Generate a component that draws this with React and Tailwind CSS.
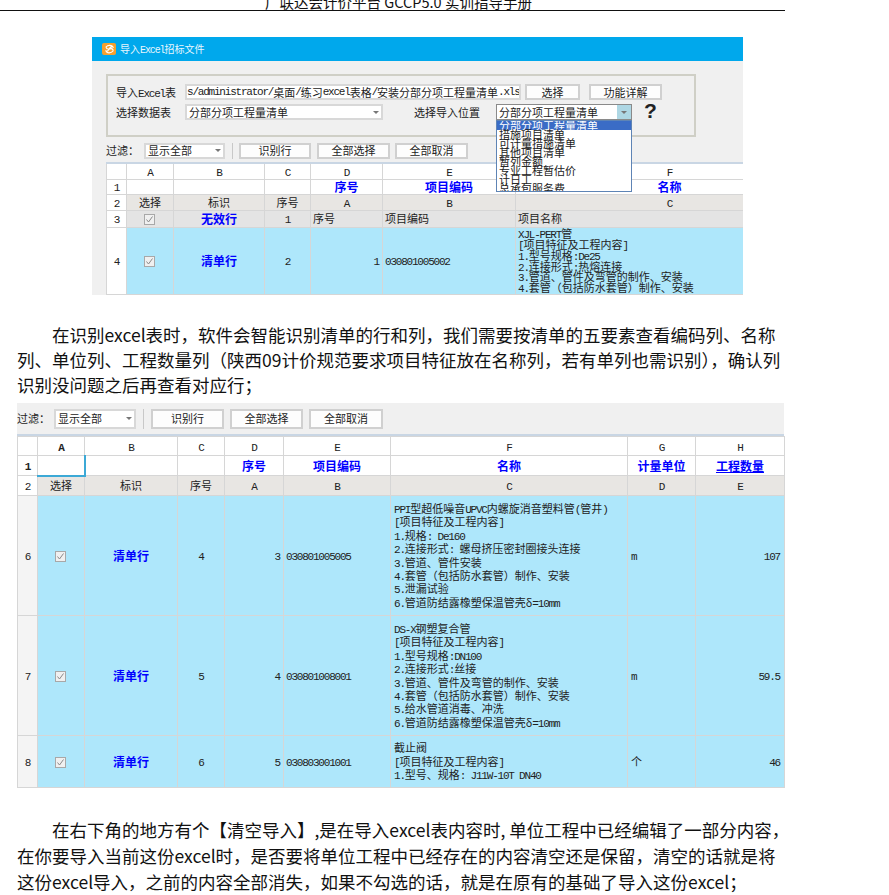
import React from 'react';

const cjk = 'font-["Noto_Sans_CJK_SC",sans-serif]';

// half-width latin next to CJK, like the bitmap font in the grid
const T = ({ children }) =>
  String(children)
    .split(/([\x20-\x7e]+)/)
    .map((part, i) =>
      /^[\x20-\x7e]+$/.test(part) ? (
        <span key={i} className="font-['Liberation_Mono',monospace] tracking-[-0.11em] leading-[0]">{part}</span>
      ) : (
        part
      )
    );

const Check = () => (
  <span className="inline-flex w-[11px] h-[11px] mr-[2px] border border-[#a8a8a8] bg-[#f0f0f0] items-center justify-center align-middle">
    <svg width="9" height="9" viewBox="0 0 9 9" fill="none">
      <path d="M1.5 4.5 L3.5 7 L7.5 1.5" stroke="#8a8a8a" strokeWidth="1" />
    </svg>
  </span>
);

const Arrow = () => <span className="w-0 h-0 border-x-[3px] border-x-transparent border-t-[3px] border-t-[#777]" />;

const Btn = ({ className = '', children }) => (
  <div className={`flex items-center justify-center bg-[#fdfdfd] border-2 border-[#d0d0d0] text-[#222] ${className}`}>{children}</div>
);

const Logo = () => (
  <span className="w-[14px] h-[12px] bg-[#f7a02d] rounded-[2px] flex items-center justify-center">
    <svg width="11" height="10" viewBox="0 0 11 10" fill="none">
      <path d="M2 3 C4 0.5 8 1 9 3 C7 2.5 5.5 3.5 5.5 5 C7.5 4 9.5 5 9 7 C7 9.5 3 9.5 2 7 C4 7.5 4.5 6 4.5 5 C3 5 2.2 4.2 2 3 Z" stroke="#fff" strokeWidth="1.2" />
    </svg>
  </span>
);

const Blue = ({ children }) => <b className="text-[#0000ff] text-[12px]">{children}</b>;

const Cell = ({ className = '', children }) => (
  <td className={`border border-[#d6d6d6] p-0 text-center overflow-hidden ${className}`}>
    {typeof children === 'string' || typeof children === 'number' ? <T>{children}</T> : children}
  </td>
);

const Lines = ({ items, className = '' }) => (
  <div className={`text-left whitespace-nowrap ${className}`}>
    {items.map((t, i) => <div key={i}><T>{t}</T></div>)}
  </div>
);

const sheetRows = [
  {
    no: 6, h: 'h-[120px]', seq: 4, idx: 3, code: '030801005005', unit: 'm', qty: '107',
    lines: ['PPI型超低噪音UPVC内螺旋消音塑料管(管井)', '[项目特征及工程内容]', '1.规格: De160', '2.连接形式: 螺母挤压密封圈接头连接', '3.管道、管件安装', '4.套管（包括防水套管）制作、安装', '5.泄漏试验', '6.管道防结露橡塑保温管壳δ=10mm'],
  },
  {
    no: 7, h: 'h-[120px]', seq: 5, idx: 4, code: '030801008001', unit: 'm', qty: '59.5',
    lines: ['DS-X钢塑复合管', '[项目特征及工程内容]', '1.型号规格:DN100', '2.连接形式:丝接', '3.管道、管件及弯管的制作、安装', '4.套管（包括防水套管）制作、安装', '5.给水管道消毒、冲洗', '6.管道防结露橡塑保温管壳δ=10mm'],
  },
  {
    no: 8, h: 'h-[52px]', seq: 6, idx: 5, code: '030803001001', unit: '个', qty: '46',
    lines: ['截止阀', '[项目特征及工程内容]', '1.型号、规格: J11W-10T DN40'],
  },
];

const FirstFigure = () => (
  <div className={`mx-[92px] w-[651px] h-[258px] bg-[#f0f0f0] overflow-hidden text-[11px] leading-none text-[#222] ${cjk}`}>
    <div className="h-[24px] bg-[#00a8ec] flex items-center gap-[4px] pl-[10px] text-[#e8f6fd] text-[10px]">
      <Logo />
      <span><T>导入Excel招标文件</T></span>
    </div>

    <div className="pt-[13px] pl-[14px]">
      {/* group box */}
      <div className="w-[590px] h-[63px] border-2 border-[#cfcfc6] pt-[8px] pl-[8px] flex flex-col gap-[4px]">
        <div className="flex items-center h-[16px]">
          <span className="w-[69px]"><T>导入Excel表</T></span>
          <div className="w-[336px] h-[16px] bg-white border-2 border-[#d8d8d8] flex items-center whitespace-nowrap overflow-hidden"><T>s/administrator/桌面/练习excel表格/安装分部分项工程量清单.xls</T></div>
          <Btn className="w-[55px] h-[16px] ml-[4px]">选择</Btn>
          <Btn className="w-[73px] h-[16px] ml-[9px]">功能详解</Btn>
        </div>
        <div className="flex items-center h-[16px]">
          <span className="w-[69px]">选择数据表</span>
          <div className="w-[198px] h-[16px] bg-white border-2 border-[#d8d8d8] flex items-center justify-between px-[2px]">
            <span>分部分项工程量清单</span>
            <Arrow />
          </div>
          <span className="ml-[31px] w-[82px]">选择导入位置</span>
          <div className="relative w-[136px] h-[16px] bg-white border border-[#8a8a8a] flex items-center justify-between pl-[2px]">
            <span>分部分项工程量清单</span>
            <span className="w-[14px] h-full bg-[#aed7e4] flex items-center justify-center"><Arrow /></span>
            <div className="absolute z-10 left-[-1px] top-[15px] w-[136px] h-[72px] bg-white border border-[#5e84b5] overflow-hidden text-[11px] leading-[9px]">
              <div className="bg-[#3a6cc6] text-white pl-[2px]">分部分项工程量清单</div>
              {['措施项目清单', '可计量措施清单', '其他项目清单', '暂列金额', '专业工程暂估价', '计日工', '总承包服务费'].map((t) => (
                <div key={t} className="pl-[2px]">{t}</div>
              ))}
            </div>
          </div>
          <span className="ml-[12px] -mt-[4px] text-[21px] font-bold font-['Liberation_Sans',sans-serif] text-[#222]">?</span>
        </div>
      </div>

      <div className="mt-[5px] flex items-center h-[17px]">
        <span className="w-[38px]">过滤：</span>
        <div className="w-[81px] h-[16px] bg-white border-2 border-[#d8d8d8] flex items-center justify-between px-[2px]">
          <span>显示全部</span>
          <Arrow />
        </div>
        <span className="w-[1px] h-[16px] bg-[#c8c8c8] ml-[7px]" />
        <Btn className="w-[72px] h-[16px] ml-[6px]">识别行</Btn>
        <Btn className="w-[73px] h-[16px] ml-[6px]">全部选择</Btn>
        <Btn className="w-[73px] h-[16px] ml-[5px]">全部取消</Btn>
      </div>

      <div className="mt-[3px] w-[637px] overflow-hidden">
        <table className="table-fixed w-[717px] border-collapse bg-white border-t-2 border-t-[#c9d6e4]">
          <colgroup>
            <col className="w-[20px]" /><col className="w-[47px]" /><col className="w-[91px]" /><col className="w-[46px]" /><col className="w-[72px]" /><col className="w-[133px]" /><col className="w-[308px]" />
          </colgroup>
          <tbody>
            <tr className="h-[16px]">
              <Cell /><Cell>A</Cell><Cell>B</Cell><Cell>C</Cell><Cell>D</Cell><Cell>E</Cell><Cell>F</Cell>
            </tr>
            <tr className="h-[15px]">
              <Cell>1</Cell><Cell /><Cell /><Cell />
              <Cell><Blue>序号</Blue></Cell><Cell><Blue>项目编码</Blue></Cell><Cell><Blue>名称</Blue></Cell>
            </tr>
            <tr className="h-[16px] bg-[#e8e6e3]">
              <Cell className="bg-white">2</Cell><Cell>选择</Cell><Cell>标识</Cell><Cell>序号</Cell><Cell>A</Cell><Cell>B</Cell><Cell>C</Cell>
            </tr>
            <tr className="h-[17px] bg-[#e4e4e4]">
              <Cell className="bg-white">3</Cell><Cell><Check /></Cell><Cell><Blue>无效行</Blue></Cell><Cell>1</Cell>
              <Cell className="text-left! pl-[2px]">序号</Cell><Cell className="text-left! pl-[2px]">项目编码</Cell><Cell className="text-left! pl-[2px]">项目名称</Cell>
            </tr>
            <tr className="h-[67px] bg-[#aee7fb]">
              <Cell className="bg-white">4</Cell><Cell><Check /></Cell><Cell><Blue>清单行</Blue></Cell><Cell>2</Cell>
              <Cell className="text-right! pr-[3px]">1</Cell><Cell className="text-left! pl-[2px]">030801005002</Cell>
              <Cell className="pl-[2px]">
                <Lines className="leading-[10.7px]" items={['XJL-PERT管', '[项目特征及工程内容]', '1.型号规格:De25', '2.连接形式:热熔连接', '3.管道、管件及弯管的制作、安装', '4.套管（包括防水套管）制作、安装']} />
              </Cell>
            </tr>
          </tbody>
        </table>
      </div>
    </div>
  </div>
);

const SecondFigure = () => (
  <div className={`ml-[17px] w-[767px] text-[11px] leading-none text-[#222] ${cjk}`}>
    <div className="h-[33px] bg-[#f0f0f0] border-b-2 border-b-[#c9d6e4] flex items-center">
      <span className="w-[37px]">过滤：</span>
      <div className="w-[82px] h-[20px] bg-white border-2 border-[#d8d8d8] flex items-center justify-between px-[2px]">
        <span>显示全部</span>
        <Arrow />
      </div>
      <span className="w-[1px] h-[20px] bg-[#c8c8c8] ml-[7px]" />
      <Btn className="w-[73px] h-[20px] ml-[7px]">识别行</Btn>
      <Btn className="w-[73px] h-[20px] ml-[6px]">全部选择</Btn>
      <Btn className="w-[74px] h-[20px] ml-[6px]">全部取消</Btn>
    </div>
    <table className="table-fixed w-[767px] border-collapse bg-white">
      <colgroup>
        <col className="w-[20px]" /><col className="w-[47px]" /><col className="w-[93px]" /><col className="w-[47px]" /><col className="w-[59px]" /><col className="w-[107px]" /><col className="w-[237px]" /><col className="w-[68px]" /><col className="w-[89px]" />
      </colgroup>
      <tbody>
        <tr className="h-[19px]">
          <Cell /><Cell><b><T>A</T></b></Cell><Cell>B</Cell><Cell>C</Cell><Cell>D</Cell><Cell>E</Cell><Cell>F</Cell><Cell>G</Cell><Cell>H</Cell>
        </tr>
        <tr className="h-[20px]">
          <Cell><b><T>1</T></b></Cell><Cell className="border-r-2 border-b-2 border-r-[#3ca9d6] border-b-[#3ca9d6]" /><Cell /><Cell />
          <Cell><Blue>序号</Blue></Cell><Cell><Blue>项目编码</Blue></Cell><Cell><Blue>名称</Blue></Cell><Cell><Blue>计量单位</Blue></Cell><Cell><Blue><u>工程数量</u></Blue></Cell>
        </tr>
        <tr className="h-[20px] bg-[#e8e6e3]">
          <Cell className="bg-white">2</Cell><Cell>选择</Cell><Cell>标识</Cell><Cell>序号</Cell><Cell>A</Cell><Cell>B</Cell><Cell>C</Cell><Cell>D</Cell><Cell>E</Cell>
        </tr>
        {sheetRows.map((r) => (
          <tr key={r.no} className={`${r.h} bg-[#aee7fb]`}>
            <Cell className="bg-[#f4f4f4]">{r.no}</Cell>
            <Cell><Check /></Cell>
            <Cell><Blue>清单行</Blue></Cell>
            <Cell>{r.seq}</Cell>
            <Cell className="text-right! pr-[3px]">{r.idx}</Cell>
            <Cell className="text-left! pl-[2px]">{r.code}</Cell>
            <Cell className="pl-[3px]">
              <Lines className="leading-[13.4px]" items={r.lines} />
            </Cell>
            <Cell className="text-left! pl-[3px]">{r.unit}</Cell>
            <Cell className="text-right! pr-[4px]">{r.qty}</Cell>
          </tr>
        ))}
      </tbody>
    </table>
  </div>
);

export default function App() {
  return (
    <div className="w-[889px] h-[895px] overflow-hidden bg-white font-['Noto_Sans_CJK_SC',sans-serif] text-[#111]">
      {/* page header, cut off by the top edge */}
      <div className="w-[785px] h-[11px] border-b border-b-[#111] flex items-end justify-center overflow-hidden">
        <span className="text-[14.5px] leading-[20px] whitespace-nowrap pl-[12px] translate-y-[2px]">广联达会计价平台 GCCP5.0 实训指导手册</span>
      </div>

      <div className="mt-[26px]"><FirstFigure /></div>

      <div className="mt-[27px] pl-[17px] text-[17.5px] leading-[25px] whitespace-nowrap">
        <div className="pl-[35px]">在识别excel表时，软件会智能识别清单的行和列，我们需要按清单的五要素查看编码列、名称</div>
        <div>列、单位列、工程数量列（陕西09计价规范要求项目特征放在名称列，若有单列也需识别），确认列</div>
        <div>识别没问题之后再查看对应行；</div>
      </div>

      <div className="mt-[6px]"><SecondFigure /></div>

      <div className="mt-[29px] pl-[17px] text-[17.5px] leading-[26px] whitespace-nowrap">
        <div className="pl-[35px]">在右下角的地方有个【清空导入】,是在导入excel表内容时, 单位工程中已经编辑了一部分内容，</div>
        <div>在你要导入当前这份excel时，是否要将单位工程中已经存在的内容清空还是保留，清空的话就是将</div>
        <div>这份excel导入，之前的内容全部消失，如果不勾选的话，就是在原有的基础了导入这份excel；</div>
      </div>
    </div>
  );
}
